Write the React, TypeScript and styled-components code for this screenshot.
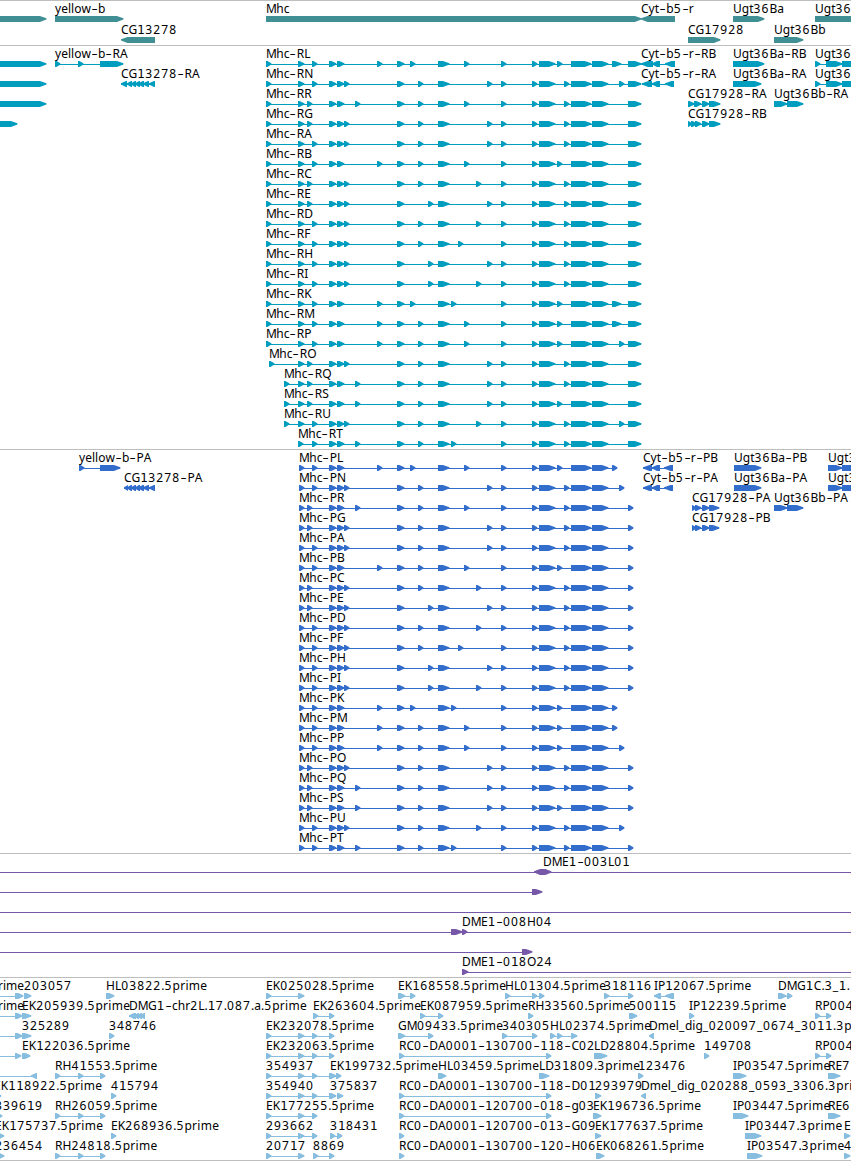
import React from "react";
import styled, { createGlobalStyle } from "styled-components";

const GlobalStyle = createGlobalStyle`
  body { margin: 0; background: #fff; overflow: hidden; }
`;

const Viewer = styled.main`
  display: flex;
  flex-direction: column;
  width: 851px;
  height: 1161px;
  box-sizing: border-box;
  overflow: hidden;
  background: #fff;
  border-bottom: 1px solid #bebebe;
`;

const Track = styled.section<{ $color: string; $pitch?: number }>`
  display: grid;
  grid-auto-rows: ${(p) => p.$pitch ?? 20}px;
  padding: 1px 0 2px;
  border-top: 1px solid #bebebe;
  color: ${(p) => p.$color};
  &:first-child { padding-bottom: 1px; }
  &:last-child { padding-bottom: 1px; }
`;

const Lane = styled.div`
  position: relative;
  height: 20px;
`;

const Strip = styled.svg<{ $color: string }>`
  position: absolute;
  left: 0;
  top: 14px;
  width: 851px;
  height: 6px;
  fill: ${(p) => p.$color};
`;

const Name = styled.span<{ $x: number }>`
  position: absolute;
  left: ${(p) => p.$x}px;
  top: -1px;
  font: 12px/16px "Noto Sans", "Open Sans", sans-serif;
  font-kerning: none;
  white-space: pre;
  color: #000;
`;

const Spaced = styled.span<{ $gap: number }>`
  letter-spacing: ${(p) => p.$gap}px;
`;

const One = styled.span`
  font-family: "DejaVu Sans", sans-serif;
  letter-spacing: 0.37px;
  line-height: 1;
`;

const Dash = styled.span`
  display: inline-block;
  width: 7.2px;
  text-align: center;
  transform: scaleX(1.6);
`;

/* A block is [start, end]; a feature is a name with its blocks joined by an intron line. */
type Block = [number, number];
interface Feature {
  name?: string;
  x?: number;
  blocks: Block[];
  dir?: "fwd" | "rev" | "both";
  line?: Block;
}

function blockPath([a, b0]: Block, dir: "fwd" | "rev" | "both") {
  const b = b0 + 0.4;
  const w = b - a;
  const h = w < 6 ? 4 : w < 9 ? 5 : 6.5;
  if (dir === "both") return `M${a} 2.2L${a + 6} 0H${b - 6}L${b} 2.2V3.6L${b - 6} 6H${a + 6}L${a} 3.6Z`;
  if (dir === "rev") return `M${b0} 0H${a + h}L${a} 2.2V3.6L${a + h} 6H${b0}Z`;
  return `M${a} 0H${b - h}L${b} 2.2V3.6L${b - h} 6H${a}Z`;
}

function Glyph({ blocks, dir = "fwd", line }: Feature) {
  const span = line ?? (blocks.length > 1 ? [blocks[0][0], blocks[blocks.length - 1][1]] : null);
  return (
    <g>
      {span && <path d={`M${span[0]} 3H${span[1]}V4H${span[0]}Z`} />}
      {blocks.map((b, i) => (
        <path key={i} d={blockPath(b, dir)} />
      ))}
    </g>
  );
}

const runs = (text: string) => text.match(/1|[02-9]+|-|_|M|prime|[^0-9\-_M]/g) ?? [];

function Label({ text }: { text: string }) {
  return (
    <>
      {runs(text).map((r, i) => {
        if (r === "1") return <One key={i}>1</One>;
        if (r === "-") return <Dash key={i}>-</Dash>;
        if (r === "_") return <Spaced key={i} $gap={0.7}>_</Spaced>;
        if (r === "M") return <Spaced key={i} $gap={-0.6}>M</Spaced>;
        if (r === "prime") return <Spaced key={i} $gap={0.3}>prime</Spaced>;
        if (/\d/.test(r)) return <Spaced key={i} $gap={1.14}>{r}</Spaced>;
        return r;
      })}
    </>
  );
}

function Row({ items, color }: { items: Feature[]; color: string }) {
  return (
    <Lane>
      <Strip viewBox="0 0 851 6" $color={color}>
        {items.map((f, i) => (
          <Glyph key={i} {...f} />
        ))}
      </Strip>
      {items.map((f, i) =>
        f.name ? (
          <Name key={i} $x={f.x ?? f.blocks[0][0]}>
            <Label text={f.name} />
          </Name>
        ) : null
      )}
    </Lane>
  );
}

const fwd = (name: string, ...blocks: Block[]): Feature => ({ name, blocks });
const rev = (name: string, ...blocks: Block[]): Feature => ({ name, blocks, dir: "rev" });
const at = (x: number, f: Feature): Feature => ({ ...f, x });
const bare = (...blocks: Block[]): Feature => ({ blocks });

const genes: Feature[][] = [
  [
    bare([-20, 46]),
    fwd("yellow-b", [55, 123]),
    fwd("Mhc", [266, 641]),
    rev("Cyt-b5-r", [641, 675]),
    fwd("Ugt36Ba", [733, 764]),
    fwd("Ugt36", [815, 880]),
  ],
  [rev("CG13278", [121, 155]), fwd("CG17928", [688, 720]), fwd("Ugt36Bb", [774, 803])],
];

/* Mhc isoforms: suffix, transcript start, exon 3, extra small exon, exon 7, exon 9, exon 12, trailing exon. */
type Isoform = [string, number, number, number, number, number, number, number];
const isoforms: Isoform[] = [
  ["L", 266, 312, 377, 410, 464, 557, 612],
  ["N", 266, 312, 344, 418, 487, 564, 619],
  ["R", 266, 307, 355, 418, 464, 564, 0],
  ["G", 266, 307, 344, 418, 487, 564, 0],
  ["A", 266, 312, 344, 418, 487, 564, 0],
  ["B", 266, 312, 377, 418, 464, 557, 0],
  ["C", 266, 307, 344, 418, 476, 564, 0],
  ["E", 266, 307, 344, 428, 487, 564, 0],
  ["D", 266, 312, 344, 418, 476, 564, 0],
  ["F", 266, 312, 344, 418, 458, 564, 0],
  ["H", 266, 312, 344, 428, 487, 564, 0],
  ["I", 266, 312, 344, 428, 476, 564, 0],
  ["K", 266, 312, 377, 410, 451, 557, 612],
  ["M", 266, 312, 377, 418, 464, 557, 612],
  ["P", 266, 312, 377, 418, 464, 557, 619],
  ["O", 269, 307, 344, 418, 487, 564, 0],
  ["Q", 284, 307, 355, 418, 487, 564, 0],
  ["S", 284, 307, 355, 418, 487, 557, 0],
  ["U", 284, 312, 344, 418, 476, 564, 619],
  ["T", 298, 312, 355, 418, 451, 564, 0],
];

const small = (x: number): Block => [x, x + 5];

function mhc(iso: Isoform, protein: boolean): Feature {
  const [id, start, e3, extra, e7, e9, e12, tail] = iso;
  const blocks: Block[] = protein
    ? [small(299)]
    : start === 298
      ? [small(298)]
      : [small(start), [298, 304]];
  blocks.push(
    small(e3), [329, 336], [337, 344], small(extra), [397, 404], small(e7), [438, 449],
    small(e9), small(501), small(532), [539, 555], small(e12), [571, 591], [592, 608]
  );
  if (protein) blocks.push(small(tail || 628));
  else {
    if (tail === 612) blocks.push([612, 621]);
    if (tail === 619) blocks.push(small(619));
    blocks.push([628, 641]);
  }
  return fwd(`Mhc-${protein ? "P" : "R"}${id}`, ...blocks);
}

const transcriptSides: Feature[][] = [
  [
    bare([-20, 46]),
    fwd("yellow-b-RA", [55, 60], [78, 83], [100, 123]),
    rev("Cyt-b5-r-RB", [641, 653], [652, 660], [665, 675]),
    fwd("Ugt36Ba-RB", [733, 764]),
    fwd("Ugt36", [815, 820], [826, 842], [842, 870]),
  ],
  [
    bare([-20, 46]),
    rev("CG13278-RA", [121, 127], [127, 132], [131, 136], [135, 140], [138, 144], [143, 149], [149, 155]),
    at(641, rev("Cyt-b5-r-RA", [642, 652], [652, 660], [665, 674])),
    fwd("Ugt36Ba-RA", [733, 761]),
    fwd("Ugt36", [815, 820], [826, 842], [842, 870]),
  ],
  [
    bare([-20, 46]),
    fwd("CG17928-RA", [688, 694], [694, 701], [702, 709], [709, 720]),
    fwd("Ugt36Bb-RA", [774, 787], [787, 803]),
  ],
  [bare([-20, 17]), fwd("CG17928-RB", [688, 692], [691, 697], [695, 701], [702, 709], [709, 720])],
];

const proteinSides: Feature[][] = [
  [
    fwd("yellow-b-PA", [79, 84], [100, 120]),
    rev("Cyt-b5-r-PB", [643, 652], [652, 660], [664, 673]),
    fwd("Ugt36Ba-PB", [734, 761]),
    fwd("Ugt3", [828, 842], [842, 870]),
  ],
  [
    rev("CG13278-PA", [124, 128], [127, 132], [131, 136], [135, 140], [138, 144], [143, 149], [149, 155]),
    rev("Cyt-b5-r-PA", [643, 652], [652, 660], [664, 673]),
    fwd("Ugt36Ba-PA", [734, 761]),
    fwd("Ugt3", [828, 842], [842, 870]),
  ],
  [
    fwd("CG17928-PA", [692, 696], [695, 701], [702, 709], [709, 719]),
    fwd("Ugt36Bb-PA", [774, 787], [787, 803]),
  ],
  [fwd("CG17928-PB", [692, 696], [695, 701], [702, 709], [709, 719])],
];

const bacs: Feature[][] = [
  [{ name: "DME1-003L01", x: 543, blocks: [[534, 551]], dir: "both", line: [0, 851] }],
  [{ blocks: [[532, 542]], line: [0, 540] }],
  [{ blocks: [], line: [0, 851] }],
  [{ name: "DME1-008H04", x: 462, blocks: [[451, 462], [462, 467]], line: [0, 851] }],
  [{ blocks: [[522, 532]], line: [0, 530] }],
  [{ name: "DME1-018O24", x: 462, blocks: [[462, 468]], line: [462, 851] }],
];

const ests: Feature[][] = [
  [
    at(-2, { name: "rime", blocks: [[15, 23]], line: [0, 20] }),
    fwd("203057", [24, 31]),
    fwd("HL03822.5prime", [106, 114]),
    fwd("EK025028.5prime", [266, 271], [298, 304]),
    fwd("EK168558.5prime", [398, 405], [410, 415]),
    fwd("HL01304.5prime", [505, 510], [532, 537], [539, 544]),
    fwd("318116", [604, 609], [628, 633]),
    rev("IP12067.5prime", [654, 661], [665, 674]),
    fwd("DMG1C.3_1.", [778, 786], [787, 792]),
  ],
  [
    at(-2, { name: "rime", blocks: [[15, 22]], line: [0, 20] }),
    fwd("EK205939.5prime", [22, 31]),
    rev("DMG1-chr2L.17.087.a.5prime", [129, 136], [134, 139], [137, 142], [140, 145]),
    fwd("EK263604.5prime", [313, 318], [329, 334]),
    fwd("EK087959.5prime", [420, 425], [438, 443]),
    fwd("RH33560.5prime", [528, 533]),
    fwd("500115", [629, 637]),
    fwd("IP12239.5prime", [689, 694]),
    fwd("RP004", [815, 820], [826, 831]),
  ],
  [
    { blocks: [[15, 22]], line: [0, 20] },
    fwd("325289", [22, 31]),
    fwd("348746", [109, 114]),
    fwd("EK232078.5prime", [266, 271], [298, 304], [312, 317], [329, 334]),
    fwd("GM09433.5prime", [398, 405], [428, 433]),
    fwd("340305", [502, 507], [532, 537]),
    fwd("HL02374.5prime", [550, 555], [557, 562], [571, 577]),
    rev("Dmel_dig_020097_0674_3011.3prime", [649, 654]),
  ],
  [
    { blocks: [[15, 21]], line: [0, 20] },
    fwd("EK122036.5prime", [22, 30]),
    fwd("EK232063.5prime", [266, 271], [298, 304], [312, 317], [329, 334]),
    fwd("RC0-DA0001-130700-118-C02", [399, 404], [546, 551]),
    fwd("LD28804.5prime", [594, 607]),
    fwd("149708", [704, 709]),
    fwd("RP004", [815, 820], [826, 831]),
  ],
  [
    { blocks: [[31, 37]], dir: "rev", line: [0, 37] },
    fwd("RH41553.5prime", [55, 60], [78, 83], [100, 105]),
    fwd("354937", [266, 271], [298, 304], [312, 317], [329, 336]),
    at(330, fwd("EK199732.5prime", [336, 341])),
    fwd("HL03459.5prime", [438, 446]),
    fwd("LD31809.3prime", [539, 549]),
    fwd("123476", [638, 643]),
    fwd("IP03547.5prime", [733, 746]),
    fwd("RE7", [828, 840]),
  ],
  [
    at(-6, fwd("EK118922.5prime", [-4, 1])),
    fwd("415794", [111, 116]),
    fwd("354940", [266, 271], [298, 304], [312, 317], [329, 336]),
    at(330, fwd("375837", [337, 343])),
    fwd("RC0-DA0001-130700-118-D01", [399, 404], [546, 551]),
    fwd("293979", [595, 601]),
    rev("Dmel_dig_020288_0593_3306.3prime", [641, 646]),
  ],
  [
    at(-5, fwd("339619", [-3, 2])),
    fwd("RH26059.5prime", [55, 60], [78, 83], [100, 105]),
    fwd("EK177255.5prime", [266, 271], [298, 304], [312, 317]),
    fwd("RC0-DA0001-120700-018-g03", [399, 404], [546, 551]),
    fwd("EK196736.5prime", [593, 601]),
    fwd("IP03447.5prime", [733, 748]),
    fwd("RE6", [828, 840]),
  ],
  [
    at(-5, fwd("EK175737.5prime", [-2, 4])),
    fwd("EK268936.5prime", [111, 116]),
    fwd("293662", [266, 271], [298, 304], [312, 317]),
    fwd("318431", [330, 335], [337, 342]),
    fwd("RC0-DA0001-120700-013-G09", [399, 404]),
    fwd("EK177637.5prime", [595, 601]),
    fwd("IP03447.3prime", [745, 761]),
    fwd("E", [844, 850]),
  ],
  [
    at(-5, fwd("236454", [-2, 4])),
    fwd("RH24818.5prime", [55, 60], [78, 83], [100, 105]),
    fwd("20717", [266, 271], [298, 304]),
    fwd("8869", [313, 318], [329, 334]),
    fwd("RC0-DA0001-130700-120-H06", [399, 404]),
    fwd("EK068261.5prime", [596, 604]),
    fwd("IP03547.3prime", [747, 762]),
    fwd("4", [844, 850]),
  ],
];

const withMhc = (sides: Feature[][], protein: boolean) =>
  isoforms.map((iso, i) => [mhc(iso, protein), ...(sides[i] ?? [])]);

const tracks: { color: string; rows: Feature[][]; pitch?: number }[] = [
  { color: "#408f94", rows: genes, pitch: 21 },
  { color: "#009dbf", rows: withMhc(transcriptSides, false) },
  { color: "#326dcc", rows: withMhc(proteinSides, true) },
  { color: "#7657a8", rows: bacs },
  { color: "#87bddf", rows: ests },
];

export default function App() {
  return (
    <>
      <GlobalStyle />
      <Viewer>
        {tracks.map((t, i) => (
          <Track key={i} $color={t.color} $pitch={t.pitch}>
            {t.rows.map((items, j) => (
              <Row key={j} items={items} color={t.color} />
            ))}
          </Track>
        ))}
      </Viewer>
    </>
  );
}
